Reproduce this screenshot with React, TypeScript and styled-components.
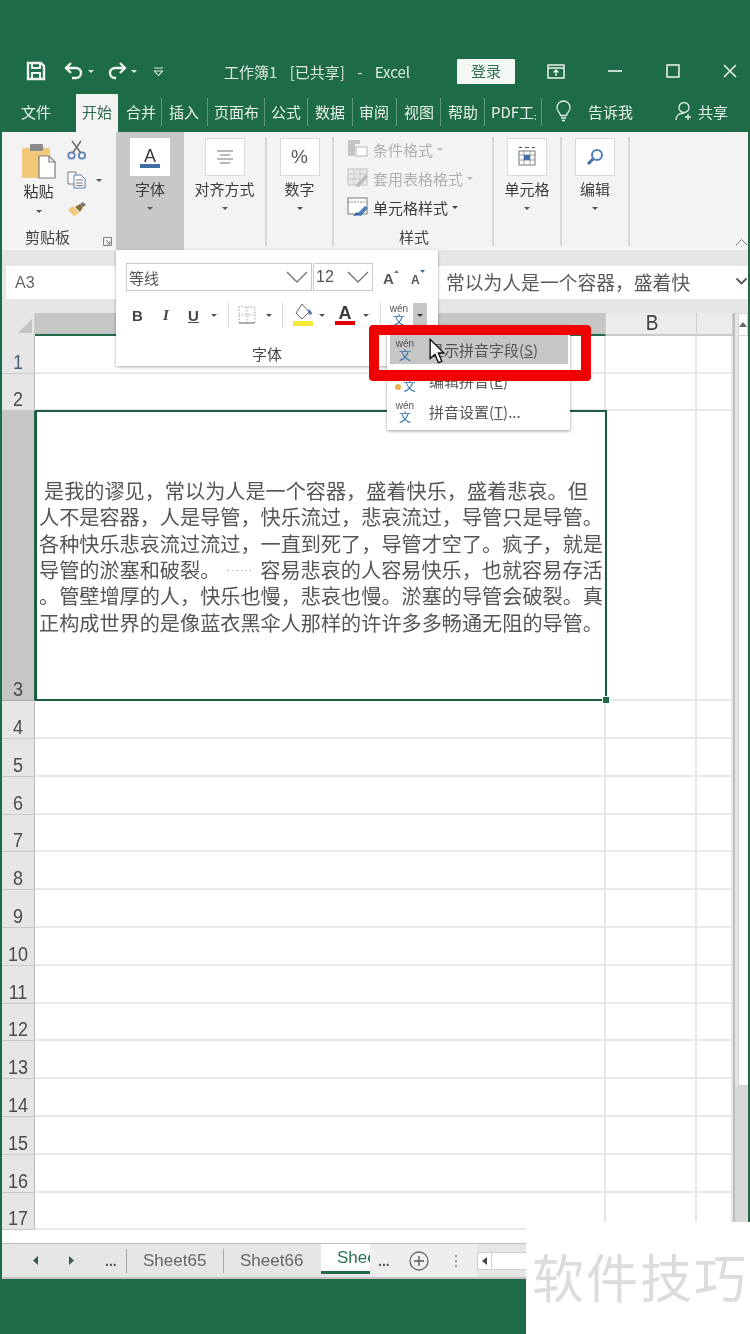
import React from "react";
import styled, { createGlobalStyle } from "styled-components";

const Global = createGlobalStyle`
  html, body { margin: 0; padding: 0; background: #1e6b47; }
  body { font-family: "Noto Sans CJK SC", "Liberation Sans", sans-serif; overflow: hidden; }
  * { box-sizing: border-box; }
`;

const CJK = `"Noto Sans CJK SC", "Liberation Sans", sans-serif`;

const Page = styled.div`
  position: relative;
  width: 750px;
  height: 1334px;
  background: #1e6b47;
  padding-top: 56px;
  overflow: hidden;
  filter: blur(0.35px);
`;

const TitleBar = styled.div`
  display: flex;
  align-items: center;
  height: 30px;
  margin-bottom: 8px;
  padding-left: 26px;
  color: #eef3f0;
`;
const QatGroup = styled.div`
  display: flex;
  align-items: center;
  width: 198px;
  gap: 4px;
`;
const QatSpacer = styled.span<{ $w: number }>`
  width: ${(p) => p.$w}px;
  flex: none;
`;
const Title = styled.div`
  width: 233px;
  font-size: 15px;
  word-spacing: 9px;
  white-space: nowrap;
  color: #dfe9e3;
`;
const LoginButton = styled.div`
  width: 58px;
  height: 25px;
  background: #f4f8f5;
  color: #2e6f4e;
  font-size: 15px;
  text-align: center;
  line-height: 24px;
  border-radius: 1px;
`;
const WinControls = styled.div`
  display: flex;
  align-items: center;
  margin-left: 32px;
`;
const WinBtn = styled.div<{ $w: number }>`
  width: ${(p) => p.$w}px;
  display: flex;
  align-items: center;
`;

const TabRow = styled.div`
  display: flex;
  align-items: center;
  height: 38px;
  padding-left: 2px;
  color: #e9f1ec;
  font-size: 15px;
`;
const Tab = styled.div<{ $w: number; $active?: boolean; $sep?: boolean; $pl?: number }>`
  width: ${(p) => p.$w}px;
  height: ${(p) => (p.$active ? "38px" : "28px")};
  align-self: ${(p) => (p.$active ? "flex-end" : "center")};
  padding: ${(p) => (p.$active ? "0 0 3px" : "0 0 2px")};
  padding-left: ${(p) => p.$pl ?? 0}px;
  padding-right: ${(p) => (p.$sep ? 5 : 0)}px;
  margin-top: ${(p) => (p.$active ? 0 : -2)}px;
  display: flex;
  align-items: center;
  overflow: hidden;
  white-space: nowrap;
  background: ${(p) => (p.$active ? "#f3f3f3" : "transparent")};
  color: ${(p) => (p.$active ? "#2b6a4a" : "inherit")};
  border-right: ${(p) => (p.$sep ? "1px solid #5f9a7d" : "none")};
`;
const TabText = styled.span`
  display: block;
  min-width: 0;
  overflow: hidden;
`;
const TabIcon = styled.div<{ $w: number; $pl?: number }>`
  width: ${(p) => p.$w}px;
  padding-left: ${(p) => p.$pl ?? 0}px;
  margin-top: -4px;
  display: flex;
  align-items: center;
`;

const Ribbon = styled.div`
  display: flex;
  height: 118px;
  margin: 0 2px;
  background: #f3f3f3;
  position: relative;
`;
const Group = styled.div<{ $w: number; $sel?: boolean; $sep?: boolean }>`
  position: relative;
  width: ${(p) => p.$w}px;
  background: ${(p) => (p.$sel ? "#c8c8c8" : "transparent")};
  display: flex;
  flex-direction: column;
  align-items: center;
  height: ${(p) => (p.$sel ? "118px" : "114px")};
  padding-top: 6px;
  padding-right: ${(p) => (p.$sep ? 2 : 0)}px;
  &::after {
    content: "";
    display: ${(p) => (p.$sep ? "block" : "none")};
    position: absolute;
    right: 0;
    top: 5px;
    bottom: 0;
    width: 2px;
    background: #d6d6d6;
  }
`;
const IconBox = styled.div<{ $plain?: boolean }>`
  width: 40px;
  height: 38px;
  background: #fff;
  border: 1px solid ${(p) => (p.$plain ? "#fff" : "#d9d9d9")};
  display: flex;
  align-items: center;
  justify-content: center;
`;
const BigLabel = styled.div`
  font-size: 15px;
  line-height: 20px;
  margin-top: 3px;
  color: #3c3c3c;
  white-space: nowrap;
`;
const Caret = styled.div<{ $c?: string }>`
  width: 0;
  height: 0;
  border-left: 3.5px solid transparent;
  border-right: 3.5px solid transparent;
  border-top: 3.5px solid ${(p) => p.$c ?? "#555"};
  flex: none;
`;
const BigCaret = styled(Caret)`
  margin-top: 8px;
`;
const GroupLabel = styled.div`
  position: absolute;
  left: 0;
  right: 0;
  top: 95px;
  text-align: center;
  font-size: 15px;
  line-height: 20px;
  color: #444;
`;
const ClipLabel = styled(GroupLabel)`
  right: 23px;
`;
const ClipGroup = styled.div`
  position: relative;
  width: 114px;
  height: 112px;
  display: grid;
  grid-template-columns: 65px 49px;
  padding-top: 10px;
`;
const PasteCol = styled.div`
  display: flex;
  flex-direction: column;
  align-items: center;
  padding-left: 8px;
`;
const PasteLabel = styled.div`
  font-size: 15px;
  line-height: 20px;
  color: #333;
  margin-top: 1px;
`;
const PasteCaret = styled(Caret)`
  margin-top: 9px;
`;
const ClipTools = styled.div`
  display: flex;
  flex-direction: column;
  gap: 6px;
  margin-top: -4px;
`;
const ClipTool = styled.div`
  display: flex;
  align-items: center;
  gap: 9px;
  height: 24px;
`;
const Launcher = styled.div`
  position: absolute;
  right: 4px;
  top: 105px;
`;
const StyleList = styled.div`
  display: flex;
  flex-direction: column;
  width: 100%;
  padding-left: 13px;
  gap: 5px;
  margin-top: -1px;
`;
const StyleRow = styled.div<{ $dim?: boolean }>`
  display: flex;
  align-items: center;
  height: 24px;
  gap: 4px;
  font-size: 15px;
  white-space: nowrap;
  color: ${(p) => (p.$dim ? "#b0b0b0" : "#3a3a3a")};
`;
const Collapse = styled.div`
  position: absolute;
  right: 0;
  top: 106px;
`;

const FormulaBar = styled.div`
  display: flex;
  height: 63px;
  margin: 0 2px;
  background: #e6e6e6;
  padding: 16px 0 0 4px;
  justify-content: space-between;
`;
const NameBox = styled.div`
  width: 216px;
  height: 33px;
  background: #fff;
  padding-left: 9px;
  font-size: 16px;
  line-height: 34px;
  color: #666;
  font-family: "Liberation Sans", sans-serif;
`;
const FormulaBox = styled.div`
  width: 310px;
  height: 33px;
  background: #fff;
  padding: 0 0 3px 8px;
  font-size: 18.8px;
  color: #5a5a5a;
  display: flex;
  justify-content: space-between;
  align-items: center;
  white-space: nowrap;
`;

const Sheet = styled.div`
  margin: 0 2px;
  background: #e6e6e6;
  height: 930px;
  display: flex;
`;
const SheetMain = styled.div`
  width: 731px;
  display: flex;
  flex-direction: column;
`;
const ColHeader = styled.div`
  display: flex;
  height: 23px;
`;
const CornerCell = styled.div`
  width: 33px;
  display: flex;
  justify-content: flex-end;
  align-items: flex-end;
  padding: 0 2px 3px 0;
  border-right: 1px solid #d0d0d0;
`;
const Tall = styled.span`
  display: inline-block;
  transform: translateY(1px) scaleY(1.15);
  transform-origin: bottom;
`;
const ColCell = styled.div<{ $w: number; $sel?: boolean }>`
  width: ${(p) => p.$w}px;
  background: ${(p) => (p.$sel ? "#c6c6c6" : "#ececec")};
  border-bottom: 2px solid ${(p) => (p.$sel ? "#1f6a48" : "#c9c9c9")};
  border-right: 1px solid #cfcfcf;
  text-align: center;
  font-family: "Liberation Sans", sans-serif;
  font-size: 19px;
  line-height: 21px;
  padding-left: 2px;
  color: #444;
`;
const Rows = styled.div`
  display: flex;
  flex-direction: column;
`;
const Row = styled.div<{ $h: number }>`
  display: flex;
  height: ${(p) => p.$h}px;
`;
const RowHead = styled.div<{ $sel?: boolean; $blue?: boolean }>`
  width: 33px;
  flex: none;
  background: ${(p) => (p.$sel ? "#c6c6c6" : "#e6e6e6")};
  border-bottom: 1px solid ${(p) => (p.$sel ? "#a8a8a8" : "#c8c8c8")};
  border-right: 1px solid ${(p) => (p.$sel ? "#1f6a48" : "#bdbdbd")};
  font-family: "Liberation Sans", sans-serif;
  font-size: 18px;
  line-height: 20px;
  color: ${(p) => (p.$blue ? "#4a5f7a" : "#4a4a4a")};
  display: flex;
  align-items: flex-end;
  justify-content: center;
`;
const Cell = styled.div<{ $w: number }>`
  width: ${(p) => p.$w}px;
  flex: none;
  background: #fff;
  border-right: 2px solid #e6e6e6;
  border-bottom: 2px solid #e8e8e8;
`;
const SelectedCell = styled.div`
  position: relative;
  width: 572px;
  margin-top: -1px;
  height: 291px;
  flex: none;
  background: #fff;
  border: 2px solid #1f5a40;
  padding: 66px 0 0 2px;
  font-family: ${CJK};
  font-size: 20.15px;
  line-height: 26.3px;
  color: #555;
`;
const CellLine = styled.div<{ $pad?: boolean }>`
  white-space: pre;
  padding-left: ${(p) => (p.$pad ? 5 : 0)}px;
`;
const Dots = styled.span`
  display: inline-block;
  width: 40px;
  padding-left: 7px;
  font-family: "Liberation Sans", sans-serif;
  font-size: 8px;
  line-height: 1;
  letter-spacing: 1.7px;
  vertical-align: 5px;
  color: #777;
`;
const Handle = styled.div`
  position: absolute;
  right: -4px;
  bottom: -4px;
  width: 6px;
  height: 6px;
  background: #1f6a48;
  outline: 1px solid #fff;
`;
const ExtraStrip = styled.div`
  flex: 1;
  background: #fff;
  display: flex;
`;
const ScrollBar = styled.div`
  width: 15px;
  display: flex;
  flex-direction: column;
  border-left: 2px solid #bdbdbd;
`;
const ScrollBtn = styled.div`
  height: 23px;
  background: #fff;
  border: 1px solid #d4d4d4;
  display: flex;
  align-items: center;
  justify-content: center;
  margin-left: 3px;
`;
const ScrollThumb = styled.div`
  height: 750px;
  background: #fff;
  border-left: 1px solid #cfcfcf;
  border-bottom: 1px solid #cfcfcf;
  margin-left: 3px;
`;
const ScrollTrack = styled.div`
  flex: 1;
  background: #d8d8d8;
`;

const SheetTabs = styled.div`
  display: flex;
  align-items: center;
  height: 36px;
  margin: 0 2px;
  background: #e6e6e6;
  border-top: 1px solid #bdbdbd;
  border-bottom: 2px solid #c4c4c4;
  font-family: "Liberation Sans", sans-serif;
  font-size: 17px;
  color: #666;
  position: relative;
`;
const NavZone = styled.div`
  display: flex;
  align-items: center;
  width: 124px;
  height: 100%;
  padding-left: 31px;
`;
const NavArrow = styled.div`
  width: 36px;
  display: flex;
`;
const More = styled.div`
  font-weight: 700;
  font-size: 14px;
  color: #555;
`;
const SheetTab = styled.div<{ $active?: boolean; $w: number }>`
  width: ${(p) => p.$w}px;
  height: ${(p) => (p.$active ? "30px" : "24px")};
  align-self: ${(p) => (p.$active ? "flex-start" : "center")};
  overflow: hidden;
  white-space: nowrap;
  display: flex;
  align-items: center;
  padding-left: 16px;
  background: ${(p) => (p.$active ? "#fff" : "transparent")};
  color: ${(p) => (p.$active ? "#2a7350" : "inherit")};
  border-left: ${(p) => (p.$active ? "none" : "1px solid #a8a8a8")};
  border-bottom: ${(p) => (p.$active ? "3px solid #1f6a48" : "none")};
`;
const TabTail = styled.div`
  display: flex;
  align-items: center;
  height: 100%;
  padding-left: 8px;
  background: #eeeeee;
  width: 107px;
`;
const TailGap = styled.div<{ $w: number }>`
  width: ${(p) => p.$w}px;
  flex: none;
  display: flex;
  justify-content: center;
`;
const HScroll = styled.div`
  width: 60px;
  height: 18px;
  background: #fff;
  border: 1px solid #cfcfcf;
  display: flex;
  align-items: center;
`;
const HScrollBtn = styled.div`
  width: 14px;
  height: 100%;
  border-right: 1px solid #cfcfcf;
  display: flex;
  align-items: center;
  justify-content: center;
`;

/* overlays */
const FontPopup = styled.div`
  position: absolute;
  left: 116px;
  top: 250px;
  width: 322px;
  height: 116px;
  background: #fff;
  box-shadow: 0 1px 3px rgba(0, 0, 0, 0.35);
  padding: 13px 0 0 10px;
`;
const ComboRow = styled.div`
  display: flex;
  align-items: center;
  height: 28px;
`;
const Combo = styled.div<{ $w: number }>`
  width: ${(p) => p.$w}px;
  height: 28px;
  border: 1px solid #c9c9c9;
  margin-right: 1px;
  display: flex;
  align-items: center;
  justify-content: space-between;
  padding: 0 3px 0 2px;
  font-size: 15px;
  color: #555;
`;
const SizeCombo = styled(Combo)`
  font-family: "Liberation Sans", sans-serif;
  font-size: 16px;
`;
const GrowIcons = styled.div`
  display: flex;
  align-items: center;
  margin-left: 9px;
  gap: 11px;
`;
const FormatRow = styled.div`
  display: flex;
  align-items: center;
  height: 24px;
  margin-top: 12px;
  padding-left: 6px;
`;
const FmtBtn = styled.div<{ $w: number; $serif?: boolean; $i?: boolean; $u?: boolean }>`
  width: ${(p) => p.$w}px;
  flex: none;
  display: flex;
  align-items: center;
  font-family: ${(p) => (p.$serif ? '"Liberation Serif", serif' : '"Liberation Sans", sans-serif')};
  font-weight: 700;
  font-style: ${(p) => (p.$i ? "italic" : "normal")};
  text-decoration: ${(p) => (p.$u ? "underline" : "none")};
  font-size: 15px;
  color: #444;
`;
const FmtSep = styled.div<{ $mr?: number }>`
  width: 1px;
  height: 26px;
  background: #dcdcdc;
  margin-right: ${(p) => p.$mr ?? 9}px;
  flex: none;
`;
const PhoneticCaret = styled.div`
  width: 14px;
  height: 24px;
  background: #c6c6c6;
  display: flex;
  align-items: center;
  justify-content: center;
  margin-left: 2px;
  flex: none;
`;
const PopupLabel = styled.div`
  position: absolute;
  left: 0;
  right: 20px;
  bottom: 2px;
  text-align: center;
  font-size: 15px;
  line-height: 20px;
  color: #444;
`;
const Menu = styled.div`
  position: absolute;
  left: 387px;
  top: 325px;
  width: 183px;
  height: 105px;
  background: #fff;
  box-shadow: 0 1px 3px rgba(0, 0, 0, 0.4);
  padding: 10px 2px 0 3px;
`;
const MenuItem = styled.div<{ $on?: boolean }>`
  display: flex;
  align-items: center;
  height: 29px;
  margin-bottom: 2px;
  background: ${(p) => (p.$on ? "#c6c6c6" : "transparent")};
  font-size: 15px;
  color: #555;
  white-space: nowrap;
`;
const MenuIcon = styled.div`
  width: 39px;
  padding-left: 3px;
  flex: none;
`;
const Mnemonic = styled.span`
  text-decoration: underline;
`;
const RedBox = styled.div`
  position: absolute;
  left: 369px;
  top: 325px;
  width: 222px;
  height: 56px;
  border: solid #f00000;
  border-width: 10px 10px 11px 10px;
  border-radius: 4px;
`;
const Cursor = styled.div`
  position: absolute;
  left: 428px;
  top: 338px;
`;
const Watermark = styled.div`
  position: absolute;
  left: 526px;
  top: 1222px;
  width: 224px;
  height: 112px;
  background: #fff;
  color: #dcdcdc;
  font-family: "Noto Sans CJK SC", sans-serif;
  font-weight: 400;
  font-size: 52px;
  line-height: 108px;
  padding-left: 6px;
  letter-spacing: 2px;
  white-space: nowrap;
`;
const WenWrap = styled.div`
  display: flex;
  flex-direction: column;
  align-items: center;
  width: 24px;
`;
const WenTop = styled.span`
  font-family: "Liberation Sans", sans-serif;
  font-size: 10px;
  line-height: 10px;
  color: #555;
`;
const WenChar = styled.span`
  font-family: ${CJK};
  font-size: 12px;
  line-height: 12px;
  font-weight: 400;
  color: #2f6fa8;
`;

const Wen = () => (
  <WenWrap>
    <WenTop>wén</WenTop>
    <WenChar>文</WenChar>
  </WenWrap>
);
const WenEdit = () => (
  <WenWrap>
    <WenTop>&nbsp;</WenTop>
    <WenChar>
      <svg width="8" height="8" viewBox="0 0 8 8" style={{ marginRight: 1 }}>
        <circle cx="4" cy="4" r="3" fill="#e8b04c" />
      </svg>
      文
    </WenChar>
  </WenWrap>
);

const Ico = (p: { w: number; h?: number; children: React.ReactNode; vb?: string }) => (
  <svg
    width={p.w}
    height={p.h ?? p.w}
    viewBox={p.vb ?? `0 0 ${p.w} ${p.h ?? p.w}`}
    fill="none"
    style={{ display: "block", flex: "none" }}
  >
    {p.children}
  </svg>
);

const Chevron = () => (
  <Ico w={22} h={12}>
    <path d="M1 1 L11 11 L21 1" stroke="#777" strokeWidth="1.4" />
  </Ico>
);

const rowsTop = [
  { n: 1, h: 37.6 },
  { n: 2, h: 37.6 },
];
const rowsBottom = Array.from({ length: 14 }, (_, i) => ({ n: i + 4, h: 37.8 }));

const TABS: { t: string; w: number; pl: number; sep?: boolean; active?: boolean }[] = [
  { t: "开始", w: 42, pl: 6, active: true },
  { t: "合并", w: 44, pl: 8, sep: true },
  { t: "插入", w: 46, pl: 7, sep: true },
  { t: "页面布", w: 57, pl: 6, sep: true },
  { t: "公式", w: 43, pl: 6, sep: true },
  { t: "数据", w: 45, pl: 7, sep: true },
  { t: "审阅", w: 44, pl: 6, sep: true },
  { t: "视图", w: 44, pl: 7, sep: true },
  { t: "帮助", w: 44, pl: 7, sep: true },
  { t: "PDF工具", w: 57, pl: 6, sep: true },
];

export default function App() {
  return (
    <Page>
      <Global />
      <TitleBar>
        <QatGroup>
          <Ico w={20}>
            <path d="M2 2h13l3 3v13H2z" stroke="#eef3f0" strokeWidth="2.4" />
            <path d="M6 2v5h8V2M6 18v-6h8v6" stroke="#eef3f0" strokeWidth="2" />
          </Ico>
          <QatSpacer $w={10} />
          <Ico w={20}>
            <path d="M7 2 L2 7 L7 12 M2 7 H12 a5 5 0 0 1 0 10 H8" stroke="#eef3f0" strokeWidth="2.4" />
          </Ico>
          <Caret $c="#dfe9e3" />
          <QatSpacer $w={5} />
          <Ico w={20}>
            <path d="M13 2 L18 7 L13 12 M18 7 H8 a5 5 0 0 0 0 10 H9" stroke="#eef3f0" strokeWidth="2.4" />
          </Ico>
          <Caret $c="#dfe9e3" />
          <QatSpacer $w={8} />
          <Ico w={11}>
            <path d="M1 2h9M1.5 5h8L5.5 9.5z" stroke="#dfe9e3" strokeWidth="1.1" />
          </Ico>
        </QatGroup>
        <Title>工作簿1 [已共享] - Excel</Title>
        <LoginButton>登录</LoginButton>
        <WinControls>
          <WinBtn $w={61}>
            <Ico w={18} h={15}>
              <rect x="1" y="1" width="16" height="13" stroke="#eef3f0" strokeWidth="1.5" />
              <path d="M1 4h16M9 12V6.5M6.5 8.5 9 6l2.5 2.5" stroke="#eef3f0" strokeWidth="1.4" />
            </Ico>
          </WinBtn>
          <WinBtn $w={58}>
            <Ico w={14} h={4}>
              <path d="M0 2h14" stroke="#eef3f0" strokeWidth="1.6" />
            </Ico>
          </WinBtn>
          <WinBtn $w={57}>
            <Ico w={14}>
              <rect x="1" y="1" width="12" height="12" stroke="#eef3f0" strokeWidth="1.5" />
            </Ico>
          </WinBtn>
          <WinBtn $w={16}>
            <Ico w={14}>
              <path d="M1 1l12 12M13 1 1 13" stroke="#eef3f0" strokeWidth="1.5" />
            </Ico>
          </WinBtn>
        </WinControls>
      </TitleBar>

      <TabRow>
        <Tab $w={74} $pl={19}>
          <TabText>文件</TabText>
        </Tab>
        {TABS.map((t) => (
          <Tab key={t.t} $w={t.w} $pl={t.pl} $sep={t.sep} $active={t.active}>
            <TabText>{t.t}</TabText>
          </Tab>
        ))}
        <TabIcon $w={46} $pl={13}>
          <Ico w={17} h={22}>
            <path
              d="M5.5 15.5C5 12.5 2 11.5 2 7.5a6.5 6.5 0 0 1 13 0c0 4-3 5-3.5 8zM6 18h5M7 20.5h3"
              stroke="#e9f1ec"
              strokeWidth="1.3"
            />
          </Ico>
        </TabIcon>
        <Tab $w={87}>
          <TabText>告诉我</TabText>
        </Tab>
        <TabIcon $w={23}>
          <Ico w={19} h={20}>
            <circle cx="9" cy="6.5" r="5" stroke="#e9f1ec" strokeWidth="1.3" />
            <path d="M1 19c0-4 3-7 8-7M13 13v6M10 16h6" stroke="#e9f1ec" strokeWidth="1.3" />
          </Ico>
        </TabIcon>
        <Tab $w={34}>
          <TabText>共享</TabText>
        </Tab>
      </TabRow>

      <Ribbon>
        <ClipGroup>
          <PasteCol>
            <Ico w={36} h={38}>
              <rect x="1" y="6" width="28" height="30" rx="1.5" fill="#f2c879" />
              <rect x="9" y="2" width="13" height="7" rx="1" fill="#8a8a8a" />
              <path d="M18 14h10l6 6v16H18z" fill="#fff" stroke="#7d7d7d" strokeWidth="1.2" />
              <path d="M28 14v6h6" stroke="#7d7d7d" strokeWidth="1.2" />
            </Ico>
            <PasteLabel>粘贴</PasteLabel>
            <PasteCaret />
          </PasteCol>
          <ClipTools>
            <ClipTool>
              <Ico w={20} h={20}>
                <circle cx="4.5" cy="15.5" r="3.2" stroke="#5a7fb0" strokeWidth="1.7" />
                <circle cx="15" cy="15.5" r="3.2" stroke="#5a7fb0" strokeWidth="1.7" />
                <path d="M6 12.5 14 1M13.5 12.5 5 1" stroke="#6b6b6b" strokeWidth="1.5" />
              </Ico>
            </ClipTool>
            <ClipTool>
              <Ico w={20} h={18}>
                <path d="M1 1h8v12H1z" fill="#fff" stroke="#7b7b7b" />
                <path d="M7 4h7l4 4v9H7z" fill="#fff" stroke="#5a7fb0" />
                <path d="M9 9h7M9 12h7M9 14.5h7" stroke="#7b7b7b" />
              </Ico>
              <Caret />
            </ClipTool>
            <ClipTool>
              <Ico w={20} h={18}>
                <path d="M1 9 7 15 12 12 6 5z" fill="#f2c879" />
                <path d="M8 6 13 3l3 3-3 5z" fill="#8a6d3b" />
                <path d="M13 3l3-2 3 3-3 2z" fill="#777" />
              </Ico>
            </ClipTool>
          </ClipTools>
          <ClipLabel>剪贴板</ClipLabel>
          <Launcher>
            <Ico w={9}>
              <path d="M.5 8.5V.5h8v8zM3 3l4 4M7 4v3H4" stroke="#777" strokeWidth=".9" />
            </Ico>
          </Launcher>
        </ClipGroup>

        <Group $w={68} $sel>
          <IconBox $plain>
            <Ico w={22}>
              <text x="11" y="16" textAnchor="middle" fontFamily="Liberation Sans" fontSize="18" fill="#3c3c3c">
                A
              </text>
              <rect x="1" y="18" width="20" height="4" fill="#3f6ea8" />
            </Ico>
          </IconBox>
          <BigLabel>字体</BigLabel>
          <BigCaret />
        </Group>
        <Group $w={83} $sep>
          <IconBox>
            <Ico w={18} h={14}>
              <path d="M1 1h16M4 5h10M1 9h16M4 13h10" stroke="#777" strokeWidth="1.2" />
            </Ico>
          </IconBox>
          <BigLabel>对齐方式</BigLabel>
          <BigCaret />
        </Group>
        <Group $w={67} $sep>
          <IconBox>
            <span style={{ fontFamily: "Liberation Sans", fontSize: 19, color: "#555" }}>%</span>
          </IconBox>
          <BigLabel>数字</BigLabel>
          <BigCaret />
        </Group>
        <Group $w={160} $sep>
          <StyleList>
            <StyleRow $dim>
              <Ico w={22} h={20}>
                <path d="M1 1h12v4H8v12H1z" fill="#c4c4c4" />
                <rect x="9" y="8" width="11" height="9" fill="#fff" stroke="#b5b5b5" />
              </Ico>
              条件格式
              <Caret $c="#b8b8b8" />
            </StyleRow>
            <StyleRow $dim>
              <Ico w={22} h={20}>
                <rect x="1" y="1" width="19" height="16" fill="#e8e8e8" stroke="#c2c2c2" />
                <path d="M1 6h19M1 11h19M7 1v16M13 1v16" stroke="#c8c8c8" />
                <path d="M8 18l10-11 3 2-9 10z" fill="#bcbcbc" />
              </Ico>
              套用表格格式
              <Caret $c="#b8b8b8" />
            </StyleRow>
            <StyleRow>
              <Ico w={22} h={20}>
                <rect x="1" y="1" width="19" height="16" fill="#fff" stroke="#777" />
                <path d="M1 5h19" stroke="#8a8a8a" strokeDasharray="2 1" />
                <path d="M9 18l9-9 3 2-7 8z" fill="#4f7fb8" />
                <path d="M6 19l4-4 3 3z" fill="#2f5f98" />
              </Ico>
              单元格样式
              <Caret $c="#444" />
            </StyleRow>
          </StyleList>
          <GroupLabel>样式</GroupLabel>
        </Group>
        <Group $w={68} $sep>
          <IconBox>
            <Ico w={20} h={22}>
              <path d="M2 1.5h3M8 1.5h4M15 1.5h3" stroke="#555" />
              <rect x="2" y="5" width="16" height="14" fill="#fff" stroke="#777" />
              <path d="M2 9h16M2 14h16M7 5v14M13 5v14" stroke="#999" />
              <rect x="7" y="9" width="6" height="5" fill="#3f6ea8" />
            </Ico>
          </IconBox>
          <BigLabel>单元格</BigLabel>
          <BigCaret />
        </Group>
        <Group $w={68} $sep>
          <IconBox>
            <Ico w={18}>
              <circle cx="11" cy="7" r="5" stroke="#4f7fb8" strokeWidth="2" />
              <path d="M7 11 2 16" stroke="#3f6ea8" strokeWidth="3" />
            </Ico>
          </IconBox>
          <BigLabel>编辑</BigLabel>
          <BigCaret />
        </Group>
        <Collapse>
          <Ico w={13} h={8}>
            <path d="M1 7 6.5 1.5 12 7" stroke="#777" strokeWidth="1" />
          </Ico>
        </Collapse>
      </Ribbon>

      <FormulaBar>
        <NameBox>A3</NameBox>
        <FormulaBox>
          常以为人是一个容器，盛着快
          <Ico w={13} h={8}>
            <path d="M1.5 1.5 6.5 6.5 11.5 1.5" stroke="#555" strokeWidth="1.8" />
          </Ico>
        </FormulaBox>
      </FormulaBar>

      <Sheet>
        <SheetMain>
          <ColHeader>
            <CornerCell>
              <Ico w={14}>
                <path d="M14 0V14H0z" fill="#c4c4c4" />
              </Ico>
            </CornerCell>
            <ColCell $w={571} $sel />
            <ColCell $w={91}>
              <Tall>B</Tall>
            </ColCell>
            <ColCell $w={36} />
          </ColHeader>
          <Rows>
            {rowsTop.map((r) => (
              <Row key={r.n} $h={r.h}>
                <RowHead $blue={r.n === 1}>
                  <Tall>{r.n}</Tall>
                </RowHead>
                <Cell $w={571} />
                <Cell $w={91} />
                <Cell $w={36} />
              </Row>
            ))}
            <Row $h={290}>
              <RowHead $sel>
                <Tall>3</Tall>
              </RowHead>
              <SelectedCell>
                <CellLine $pad>是我的谬见，常以为人是一个容器，盛着快乐，盛着悲哀。但</CellLine>
                <CellLine>人不是容器，人是导管，快乐流过，悲哀流过，导管只是导管。</CellLine>
                <CellLine>各种快乐悲哀流过流过，一直到死了，导管才空了。疯子，就是</CellLine>
                <CellLine>
                  导管的淤塞和破裂。<Dots>······</Dots>容易悲哀的人容易快乐，也就容易存活
                </CellLine>
                <CellLine>。管壁增厚的人，快乐也慢，悲哀也慢。淤塞的导管会破裂。真</CellLine>
                <CellLine>正构成世界的是像蓝衣黑伞人那样的许许多多畅通无阻的导管。</CellLine>
                <Handle />
              </SelectedCell>
              <Cell $w={90} />
              <Cell $w={36} />
            </Row>
            {rowsBottom.map((r) => (
              <Row key={r.n} $h={r.h}>
                <RowHead>
                  <Tall>{r.n}</Tall>
                </RowHead>
                <Cell $w={571} />
                <Cell $w={91} />
                <Cell $w={36} />
              </Row>
            ))}
          </Rows>
          <ExtraStrip />
        </SheetMain>
        <ScrollBar>
          <ScrollBtn>
            <Ico w={8} h={5}>
              <path d="M4 0 8 5H0z" fill="#666" />
            </Ico>
          </ScrollBtn>
          <ScrollThumb />
          <ScrollTrack />
        </ScrollBar>
      </Sheet>

      <SheetTabs>
        <NavZone>
          <NavArrow>
            <Ico w={5} h={9}>
              <path d="M5 0V9L0 4.5z" fill="#3c5a4a" />
            </Ico>
          </NavArrow>
          <NavArrow>
            <Ico w={5} h={9}>
              <path d="M0 0V9L5 4.5z" fill="#3c5a4a" />
            </Ico>
          </NavArrow>
          <More>...</More>
        </NavZone>
        <SheetTab $w={97}>Sheet65</SheetTab>
        <SheetTab $w={98}>Sheet66</SheetTab>
        <SheetTab $active $w={49}>Sheet67</SheetTab>
        <TabTail>
          <More>...</More>
          <TailGap $w={58}>
            <Ico w={20}>
              <circle cx="10" cy="10" r="9" stroke="#666" strokeWidth="1.3" />
              <path d="M10 5v10M5 10h10" stroke="#555" strokeWidth="1.3" />
            </Ico>
          </TailGap>
          <TailGap $w={16}>
            <Ico w={4} h={14}>
              <path d="M2 1v2M2 6v2M2 11v2" stroke="#999" strokeWidth="2" />
            </Ico>
          </TailGap>
        </TabTail>
        <HScroll>
          <HScrollBtn>
            <Ico w={5} h={8}>
              <path d="M5 0V8L0 4z" fill="#444" />
            </Ico>
          </HScrollBtn>
        </HScroll>
      </SheetTabs>

      <FontPopup>
        <ComboRow>
          <Combo $w={186}>
            等线
            <Chevron />
          </Combo>
          <SizeCombo $w={60}>
            12
            <Chevron />
          </SizeCombo>
          <GrowIcons>
            <Ico w={16}>
              <text x="0" y="15" fontFamily="Liberation Sans" fontWeight="700" fontSize="15" fill="#555">
                A
              </text>
              <path d="M11 4l2.5-3L16 4z" fill="#777" />
            </Ico>
            <Ico w={16}>
              <text x="1" y="15" fontFamily="Liberation Sans" fontWeight="700" fontSize="12" fill="#555">
                A
              </text>
              <path d="M10 1l2.5 3L15 1z" fill="#3f6ea8" />
            </Ico>
          </GrowIcons>
        </ComboRow>
        <FormatRow>
          <FmtBtn $w={31}>B</FmtBtn>
          <FmtBtn $w={25} $serif $i>I</FmtBtn>
          <FmtBtn $w={23} $u>U</FmtBtn>
          <FmtBtn $w={17}><Caret /></FmtBtn>
          <FmtSep />
          <FmtBtn $w={28}>
            <Ico w={18}>
              <path d="M1 1h16v16H1zM9 1v16M1 9h16" stroke="#a8a8a8" strokeDasharray="1.5 1.5" />
              <path d="M1 17h16" stroke="#777" />
            </Ico>
          </FmtBtn>
          <FmtBtn $w={16}><Caret /></FmtBtn>
          <FmtSep />
          <FmtBtn $w={27}>
            <Ico w={22} h={24}>
              <path d="M10 1 4 10l6 6 7-7z" fill="#fff" stroke="#666" />
              <path d="M16 6c3 1 4 3 4 5l-3 1z" fill="#4f7fb8" />
              <rect x="1" y="18" width="20" height="5" fill="#f5e73a" />
            </Ico>
          </FmtBtn>
          <FmtBtn $w={16}><Caret /></FmtBtn>
          <FmtBtn $w={28}>
            <Ico w={20} h={22}>
              <text x="10" y="15" textAnchor="middle" fontFamily="Liberation Sans" fontSize="18" fill="#3c3c3c">
                A
              </text>
              <rect x="0" y="17" width="20" height="4" fill="#e30000" />
            </Ico>
          </FmtBtn>
          <FmtBtn $w={17}><Caret /></FmtBtn>
          <FmtSep $mr={6} />
          <Wen />
          <PhoneticCaret><Caret $c="#333" /></PhoneticCaret>
        </FormatRow>
        <PopupLabel>字体</PopupLabel>
      </FontPopup>

      <Menu>
        <MenuItem $on>
          <MenuIcon><Wen /></MenuIcon>
          显示拼音字段(<Mnemonic>S</Mnemonic>)
        </MenuItem>
        <MenuItem>
          <MenuIcon><WenEdit /></MenuIcon>
          编辑拼音(<Mnemonic>E</Mnemonic>)
        </MenuItem>
        <MenuItem>
          <MenuIcon><Wen /></MenuIcon>
          拼音设置(<Mnemonic>T</Mnemonic>)...
        </MenuItem>
      </Menu>
      <RedBox />
      <Cursor>
        <Ico w={18} h={26} vb="0 0 12 19">
          <path d="M1 1v14l3.5-3 2.5 6 2.5-1-2.5-6H11z" fill="#fff" stroke="#111" strokeWidth="1" />
        </Ico>
      </Cursor>
      <Watermark>软件技巧</Watermark>
    </Page>
  );
}
